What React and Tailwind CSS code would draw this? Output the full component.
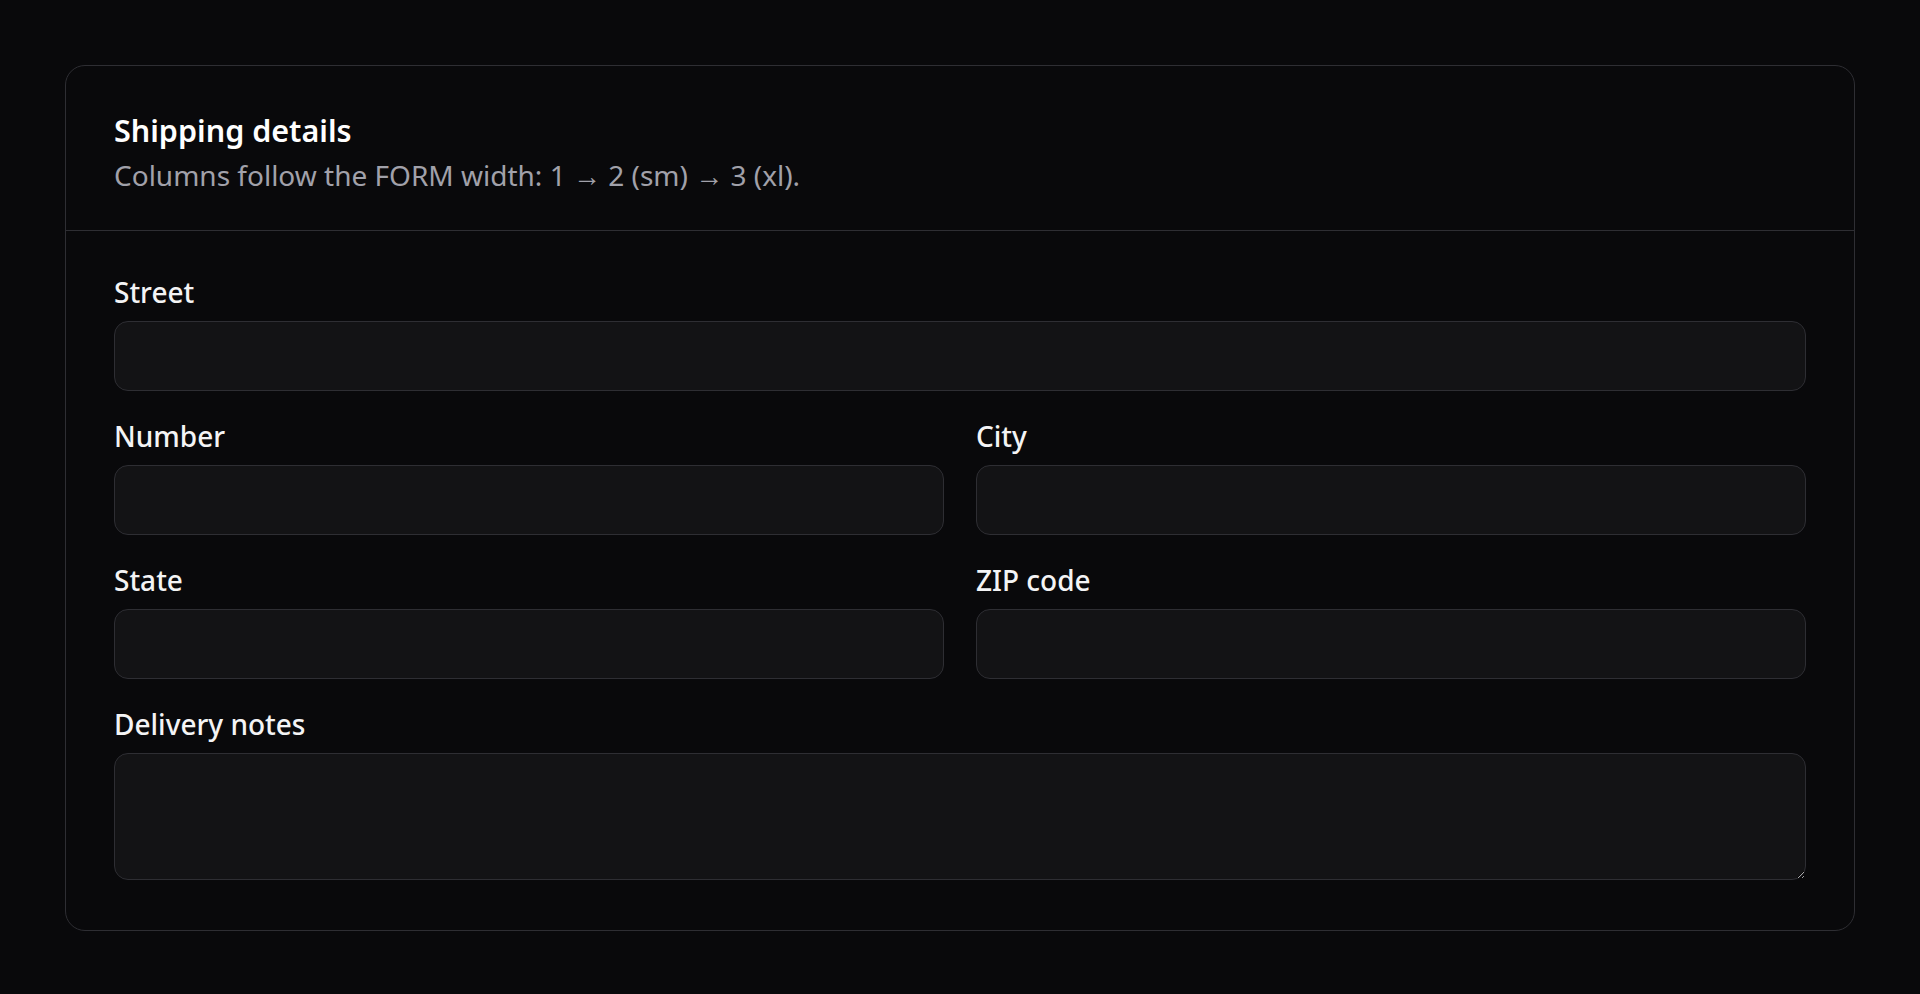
// App.jsx — shipping details form card
const fieldLabel = "block text-[28px] leading-[35px] font-medium text-[#f4f4f5]";
const fieldInput =
  "mt-[11px] block w-full h-[70px] rounded-[14px] border border-[#2e2e33] bg-[#131315] px-5 text-[27px] text-[#f4f4f5] outline-none";

function Field({ label, id }) {
  return (
    <div>
      <label htmlFor={id} className={fieldLabel}>
        {label}
      </label>
      <input id={id} type="text" className={fieldInput} />
    </div>
  );
}

export default function App() {
  return (
    <div
      className="min-h-screen bg-[#09090b] p-[65px] [color-scheme:dark]"
      style={{ fontFamily: '"Noto Sans", "Open Sans", sans-serif' }}
    >
      <div className="rounded-[20px] border border-[#2e2e33] bg-[#09090b]">
        {/* header */}
        <div className="border-b border-[#2e2e33] px-12 pt-[44px] pb-[35px]">
          <h2 className="text-[30.5px] leading-[40px] font-semibold text-white">Shipping details</h2>
          <p className="mt-[5px] text-[28px] leading-[40px] text-[#a1a1aa]">
            Columns follow the FORM width: 1 → 2 (sm) → 3 (xl).
          </p>
        </div>

        {/* form */}
        <form className="grid grid-cols-2 gap-x-8 gap-y-[28px] px-12 pt-[44px] pb-[50px]">
          <div className="col-span-2">
            <Field label="Street" id="street" />
          </div>
          <Field label="Number" id="number" />
          <Field label="City" id="city" />
          <Field label="State" id="state" />
          <Field label="ZIP code" id="zip" />
          <div className="col-span-2">
            <label htmlFor="notes" className={fieldLabel}>
              Delivery notes
            </label>
            <textarea
              id="notes"
              className="mt-[11px] block w-full h-[127px] rounded-[14px] border border-[#2e2e33] bg-[#131315] px-5 py-4 text-[27px] text-[#f4f4f5] outline-none"
            />
          </div>
        </form>
      </div>
    </div>
  );
}
